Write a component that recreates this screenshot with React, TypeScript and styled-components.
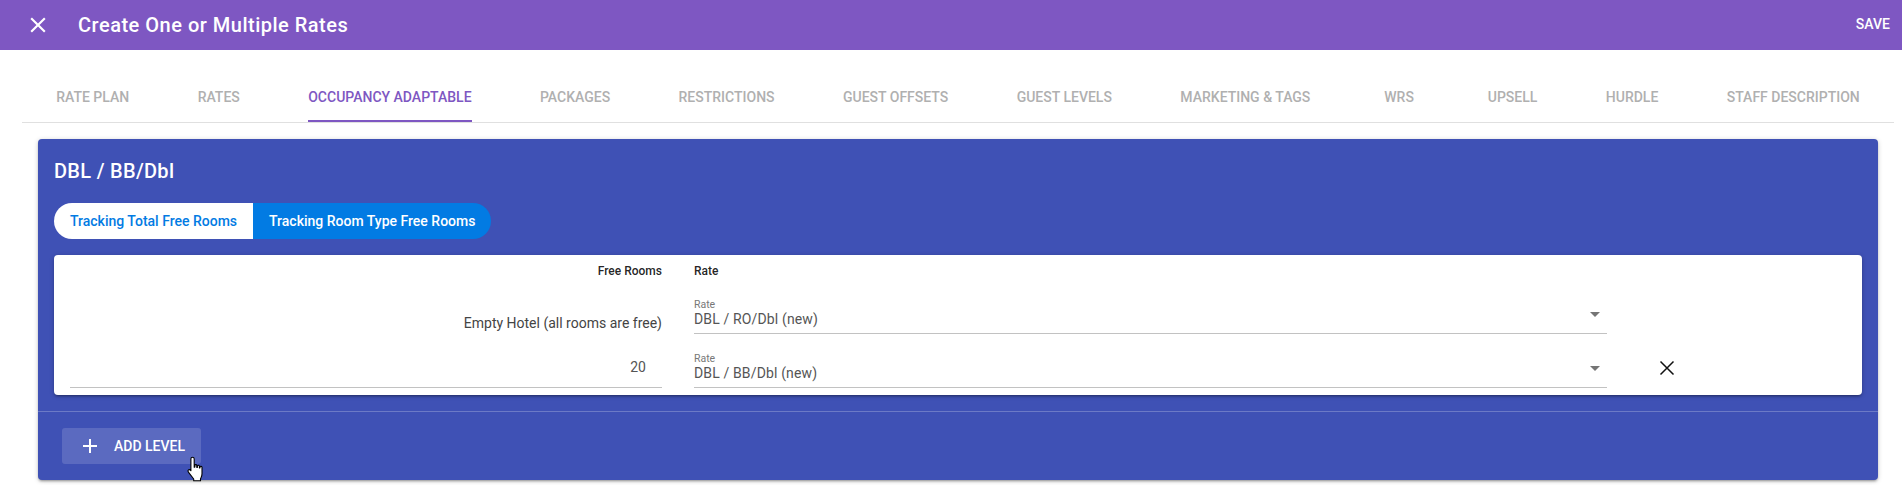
import styled, { createGlobalStyle } from 'styled-components';

const TABS = [
  'Rate Plan',
  'Rates',
  'Occupancy Adaptable',
  'Packages',
  'Restrictions',
  'Guest Offsets',
  'Guest Levels',
  'Marketing & Tags',
  'WRS',
  'Upsell',
  'Hurdle',
  'Staff Description',
];

const CLOSE_PATH =
  'M19 6.41L17.59 5 12 10.59 6.41 5 5 6.41 10.59 12 5 17.59 6.41 19 12 13.41 17.59 19 19 17.59 13.41 12z';

const SelectField = ({ value }: { value: string }) => (
  <Field>
    <FieldLabel>Rate</FieldLabel>
    <FieldValue>{value}</FieldValue>
    <Caret />
  </Field>
);

const App = () => {
  return (
    <Page>
      <GlobalStyle />
      <Header>
        <CloseButton aria-label='close'>
          <svg width='26' height='26' viewBox='0 0 24 24' fill='currentColor'>
            <path d={CLOSE_PATH} />
          </svg>
        </CloseButton>
        <Title>Create One or Multiple Rates</Title>
        <SaveButton>Save</SaveButton>
      </Header>

      <Tabs>
        {TABS.map((tab) => (
          <Tab key={tab}>
            <TabLabel $active={tab === 'Occupancy Adaptable'}>{tab}</TabLabel>
          </Tab>
        ))}
      </Tabs>

      <Panel>
        <PanelBody>
          <PanelTitle>DBL / BB/Dbl</PanelTitle>
          <Toggle>
            <ToggleOption>Tracking Total Free Rooms</ToggleOption>
            <ToggleOption $active>Tracking Room Type Free Rooms</ToggleOption>
          </Toggle>
          <LevelsCard>
            <HeadCell $right>Free Rooms</HeadCell>
            <HeadCell>Rate</HeadCell>
            <span />

            <EmptyHotel>Empty Hotel (all rooms are free)</EmptyHotel>
            <SelectField value='DBL / RO/Dbl (new)' />
            <span />

            <RoomsInput>20</RoomsInput>
            <SelectField value='DBL / BB/Dbl (new)' />
            <RemoveButton aria-label='remove'>
              <svg width='16' height='16' viewBox='0 0 16 16' fill='none' stroke='#111' strokeWidth='1.5'>
                <path d='M1.5 1.5L14.5 14.5M14.5 1.5L1.5 14.5' />
              </svg>
            </RemoveButton>
          </LevelsCard>
        </PanelBody>
        <PanelActions>
          <AddButton>
            <svg width='24' height='24' viewBox='0 0 24 24' fill='currentColor'>
              <path d='M19 13h-6v6h-2v-6H5v-2h6V5h2v6h6v2z' />
            </svg>
            Add Level
            <HandCursor width='22' height='27' viewBox='0 0 22 27'>
              <path
                d='M6.5 1.2c1 0 1.7.8 1.7 1.8v8.2l.7-.1V9.4c0-.9 1.5-1.1 1.9 0v2l.6.1v-1.4c0-1 1.6-1.2 2 0v1.8l.6.1v-.9c0-1 1.8-1.2 2 .2v6.4c0 2.6-1 3.7-1.5 5.3v1.7H7.7v-1.7L2.6 16.3c-.8-1-.8-2 .1-2.5.8-.4 1.5 0 2 .6l.2.3V3c0-1 .7-1.8 1.6-1.8z'
                fill='#fff'
                stroke='#000'
                strokeWidth='1.1'
                strokeLinejoin='round'
              />
            </HandCursor>
          </AddButton>
        </PanelActions>
      </Panel>
    </Page>
  );
};

export default App;

const GlobalStyle = createGlobalStyle`
  html, body {
    margin: 0;
    padding: 0;
    background: #fff;
  }
  * {
    box-sizing: border-box;
  }
`;

const Page = styled.div`
  width: 1902px;
  height: 485px;
  overflow: hidden;
  font-family: Roboto, 'Liberation Sans', sans-serif;
  font-size: 14px;
  color: rgba(0, 0, 0, 0.87);
`;

const Header = styled.header`
  height: 50px;
  background: #7e57c2;
  color: #fff;
  display: flex;
  align-items: center;
  padding: 0 12px 0 25px;
`;

const CloseButton = styled.div`
  width: 26px;
  height: 26px;
  display: flex;
`;

const Title = styled.div`
  margin-left: 27px;
  font-size: 20px;
  font-weight: 500;
  letter-spacing: 0.5px;
  flex: 1;
`;

const SaveButton = styled.div`
  font-size: 14px;
  font-weight: 500;
  text-transform: uppercase;
  margin-top: -2px;
`;

const Tabs = styled.nav`
  margin: 24px 8px 0 22px;
  height: 49px;
  display: flex;
  border-bottom: 1px solid #e0e0e0;
`;

const Tab = styled.div`
  flex: 1 1 auto;
  min-width: 109px;
  display: flex;
  justify-content: center;
`;

const TabLabel = styled.div<{ $active?: boolean }>`
  height: 48px;
  padding-top: 14px;
  line-height: 18px;
  font-size: 14px;
  font-weight: 500;
  text-transform: uppercase;
  white-space: nowrap;
  color: ${(p) => (p.$active ? '#7e57c2' : '#b0b0b0')};
  border-bottom: 2px solid ${(p) => (p.$active ? '#7e57c2' : 'transparent')};
`;

const Panel = styled.section`
  margin: 16px 24px 0 38px;
  height: 341px;
  background: #3f51b5;
  border-radius: 4px;
  box-shadow: 0 1px 5px rgba(0, 0, 0, 0.2), 0 2px 2px rgba(0, 0, 0, 0.14), 0 3px 1px -2px rgba(0, 0, 0, 0.12);
  color: #fff;
`;

const PanelBody = styled.div`
  height: 273px;
  padding: 19px 16px 0;
  border-bottom: 1px solid rgba(255, 255, 255, 0.24);
`;

const PanelTitle = styled.div`
  font-size: 20px;
  font-weight: 500;
  line-height: 26px;
  letter-spacing: 0.3px;
`;

const Toggle = styled.div`
  display: inline-flex;
  height: 36px;
  margin-top: 19px;
  border-radius: 18px;
  overflow: hidden;
`;

const ToggleOption = styled.div<{ $active?: boolean }>`
  display: flex;
  align-items: center;
  padding: 0 16px;
  font-weight: 500;
  background: ${(p) => (p.$active ? '#027be3' : '#fff')};
  color: ${(p) => (p.$active ? '#fff' : '#027be3')};
`;

const LevelsCard = styled.div`
  margin-top: 16px;
  height: 140px;
  padding: 0 16px;
  background: #fff;
  border-radius: 4px;
  box-shadow: 0 1px 5px rgba(0, 0, 0, 0.2), 0 2px 2px rgba(0, 0, 0, 0.14), 0 3px 1px -2px rgba(0, 0, 0, 0.12);
  color: rgba(0, 0, 0, 0.87);
  display: grid;
  grid-template-columns: 592px 913px 120px;
  grid-template-rows: 32px 47px 54px;
  column-gap: 32px;
`;

const HeadCell = styled.div<{ $right?: boolean }>`
  font-size: 12px;
  font-weight: 500;
  line-height: 32px;
  text-align: ${(p) => (p.$right ? 'right' : 'left')};
`;

const EmptyHotel = styled.div`
  text-align: right;
  padding-top: 27px;
  line-height: 18px;
  color: #444;
`;

const RoomsInput = styled.div`
  height: 54px;
  padding-top: 24px;
  line-height: 18px;
  text-align: right;
  padding-right: 16px;
  color: #555;
  border-bottom: 1px solid #c2c2c2;
`;

const Field = styled.div`
  position: relative;
  align-self: end;
  height: 37px;
  border-bottom: 1px solid #c2c2c2;
`;

const FieldLabel = styled.div`
  font-size: 10.5px;
  line-height: 12px;
  margin-top: 2px;
  color: #777;
`;

const FieldValue = styled.div`
  line-height: 16px;
  letter-spacing: 0.01em;
  color: #555;
`;

const Caret = styled.span`
  position: absolute;
  top: 15px;
  right: 7px;
  border-left: 5px solid transparent;
  border-right: 5px solid transparent;
  border-top: 5px solid #757575;
`;

const RemoveButton = styled.div`
  align-self: end;
  margin: 0 0 12px 20px;
  width: 16px;
  height: 16px;
  display: flex;
`;

const PanelActions = styled.div`
  padding: 16px 24px;
`;

const AddButton = styled.div`
  position: relative;
  width: 139px;
  height: 36px;
  padding-left: 16px;
  display: flex;
  align-items: center;
  gap: 12px;
  border-radius: 3px;
  background: rgba(255, 255, 255, 0.15);
  font-size: 14px;
  font-weight: 500;
  text-transform: uppercase;
`;

const HandCursor = styled.svg`
  position: absolute;
  left: 124px;
  top: 28px;
`;
